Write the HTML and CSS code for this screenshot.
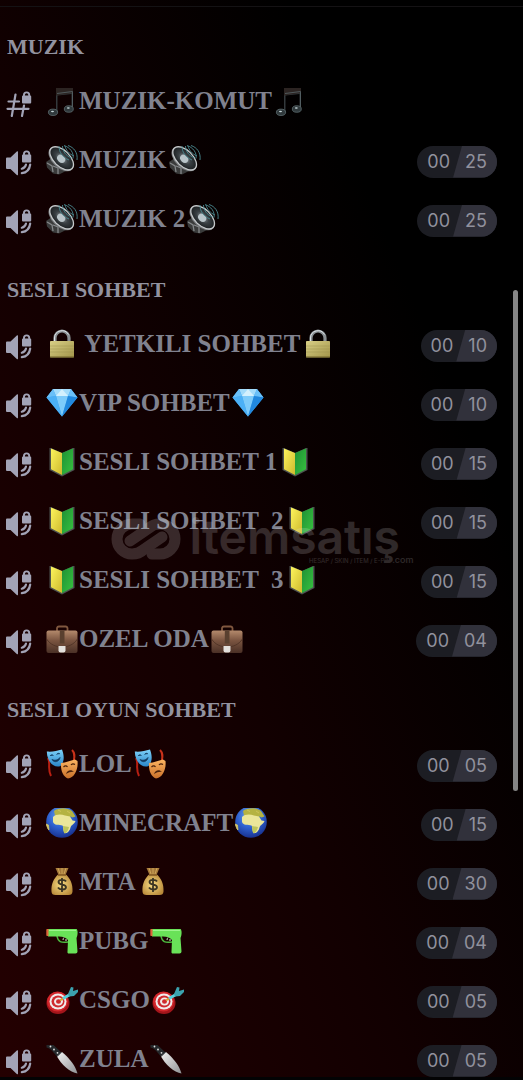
FILE: index.html
```html
<!DOCTYPE html>
<html lang="tr">
<head>
    <meta charset="UTF-8">
    <meta name="viewport" content="width=device-width, initial-scale=1.0">
    <title>Kanallar</title>
    <link rel="stylesheet" href="styles.css">
</head>
<body>
    <svg class="sprite" aria-hidden="true">
        <defs>
            <linearGradient id="gold" x1="0" y1="0" x2="1" y2="1">
                <stop offset="0" stop-color="#d8cf86"/><stop offset="1" stop-color="#a3954a"/>
            </linearGradient>
            <linearGradient id="steel" x1="0" y1="0" x2="1" y2="1">
                <stop offset="0" stop-color="#f2f2f2"/><stop offset="1" stop-color="#8f9194"/>
            </linearGradient>
            <linearGradient id="leather" x1="0" y1="0" x2="0" y2="1">
                <stop offset="0" stop-color="#b48a6c"/><stop offset=".45" stop-color="#7a5440"/><stop offset="1" stop-color="#4a3026"/>
            </linearGradient>
            <linearGradient id="yellow" x1="0" y1="0" x2="1" y2="1">
                <stop offset="0" stop-color="#fdf45c"/><stop offset="1" stop-color="#cdb92e"/>
            </linearGradient>
            <linearGradient id="green" x1="0" y1="0" x2="1" y2="1">
                <stop offset="0" stop-color="#1f8f35"/><stop offset="1" stop-color="#37c23f"/>
            </linearGradient>
            <radialGradient id="sea" cx=".45" cy=".3" r=".75">
                <stop offset="0" stop-color="#6fa9ee"/><stop offset=".5" stop-color="#2f62d0"/><stop offset="1" stop-color="#142a86"/>
            </radialGradient>
            <radialGradient id="sack" cx=".45" cy=".5" r=".6">
                <stop offset="0" stop-color="#f7dc84"/><stop offset="1" stop-color="#b98a3a"/>
            </radialGradient>
            <radialGradient id="cone" cx=".5" cy=".5" r=".55">
                <stop offset="0" stop-color="#9aa3a8"/><stop offset=".45" stop-color="#3b4145"/><stop offset="1" stop-color="#15181a"/>
            </radialGradient>
            <linearGradient id="blueface" x1="0" y1="0" x2="0" y2="1">
                <stop offset="0" stop-color="#7ed2fa"/><stop offset="1" stop-color="#2a86c8"/>
            </linearGradient>
            <linearGradient id="orangeface" x1="0" y1="0" x2="0" y2="1">
                <stop offset="0" stop-color="#fdb562"/><stop offset="1" stop-color="#c8702a"/>
            </linearGradient>
        </defs>

        <symbol id="voice" viewBox="0 1 26 28">
            <path d="M1 10.500h3.500l6.300-6a.7.700 0 0 1 1.200.5v22.600a.7.700 0 0 1-1.200.5L4.500 22H1a1 1 0 0 1-1-1v-9.500a1 1 0 0 1 1-1z"/>
            <path d="M17 7.500V7a3.600 3.600 0 0 1 7.200 0v.5a1 1 0 0 1 1 1V14.500a1 1 0 0 1-1 1H17a1 1 0 0 1-1-1V8.500a1 1 0 0 1 1-1zm1.900 0h3.400V7a1.700 1.700 0 0 0-3.400 0z"/>
            <path class="line" d="M15.800 21.700c2.300-.5 3.700-1.900 4.200-4.200M15.800 26.200c4.500-.6 7.800-4 8.400-8.700"/>
        </symbol>
        <symbol id="hash" viewBox="0 1 26 28">
            <path class="line" d="M9.500 6.500L5.800 28M18 17.500L16 28M2.500 13.500H13M1.500 20.800h21"/>
            <path d="M17 7.500V7a3.600 3.600 0 0 1 7.200 0v.5a1 1 0 0 1 1 1V14.500a1 1 0 0 1-1 1H17a1 1 0 0 1-1-1V8.500a1 1 0 0 1 1-1zm1.900 0h3.400V7a1.700 1.700 0 0 0-3.400 0z"/>
        </symbol>

        <symbol id="note" viewBox="0 0 32 30">
            <path d="M10 2h17v21h-1.500V8L11.500 9.500V27H10z" fill="#33393c"/>
            <path d="M10 2h17v5L10 9.500z" fill="#2c2422"/>
            <path d="M11 7.500L26.500 5.500V22" fill="none" stroke="#59676b" stroke-width=".8"/>
            <ellipse cx="7" cy="26.300" rx="4.600" ry="3.200" fill="#30393c" stroke="#65757a" stroke-width=".7"/>
            <ellipse cx="22.800" cy="23" rx="4.500" ry="3.300" fill="#30393c" stroke="#65757a" stroke-width=".7"/>
            <ellipse cx="6.500" cy="25.500" rx="1.500" ry=".8" fill="#c6d6d8"/>
            <ellipse cx="22.300" cy="22" rx="1.500" ry=".8" fill="#c6d6d8"/>
        </symbol>
        <symbol id="speaker" viewBox="0 0 32 30">
            <path d="M0 17l6-4 15 10-1 3-7 3.500-6-1-6-6z" fill="#3a3b3b"/>
            <path d="M1 18l5 3 1 6M7 21l5 2v6" fill="none" stroke="#85888a" stroke-width="1.300"/>
            <g transform="rotate(44 15.500 13.500)">
                <ellipse cx="15.500" cy="14" rx="15.300" ry="9" fill="#777a7d"/>
                <ellipse cx="15.500" cy="13.300" rx="14.500" ry="8" fill="url(#cone)" stroke="#c5c8ca" stroke-width="1.300"/>
                <ellipse cx="15.500" cy="14" rx="4.500" ry="3.500" fill="#b9c4c9"/>
            </g>
            <path d="M13 1c0 6 3 11 10 14M16.500 1c0 5 3 9.500 9 12M19 1c1 4 4 8 9 10M22 .5c6 2 10 7 9 14.500M18 .5c6 2 10 7 9 13" fill="none" stroke="#4b8b92" stroke-width=".9"/>
        </symbol>
        <symbol id="lock" viewBox="0 0 32 30">
            <path d="M9 13V9a7 7 0 0 1 14 0v4" fill="none" stroke="#8a9094" stroke-width="3.200"/>
            <path d="M8.500 12V9a7.500 7.500 0 0 1 14-3.500" fill="none" stroke="#dce3e8" stroke-width="1"/>
            <rect x="4" y="12" width="24" height="16.500" rx=".8" fill="url(#gold)"/>
            <path d="M4 17h24M4 20h24M4 23h24" stroke="#968a48" stroke-width=".4"/>
            <path d="M4 28h24" stroke="#6d612b"/>
        </symbol>
        <symbol id="diamond" viewBox="0 0 32 30">
            <path d="M7 1h18l6.500 8.500L16 28.500.5 9.500z" fill="#3fa4f2"/>
            <path d="M7 1h18l-3 7H10z" fill="#a3dcfb"/>
            <path d="M7 1L.5 9.500 10 8zM25 1l6.500 8.500L22 8z" fill="#6ac0f8"/>
            <path d="M10 8h12l-6 20.500z" fill="#7dcbfa"/>
            <path d="M.5 9.500L10 8l6 20.500z" fill="#4bb0f6"/>
            <path d="M22 8l9.500 1.500L16 28.500z" fill="#2188de"/>
            <path d="M16 1l-6 7h12z" fill="#d3f0fd"/>
        </symbol>
        <symbol id="shield" viewBox="0 0 32 30">
            <path d="M4 1h1l11 5L27 1h1.500v22L16 29.500 3.500 23V1z" fill="#4d5250"/>
            <path d="M5 1.500L16 6v22L5 22.300z" fill="url(#yellow)"/>
            <path d="M27 1.500L16 6v22l11-5.700z" fill="url(#green)"/>
        </symbol>
        <symbol id="briefcase" viewBox="0 0 32 30">
            <path d="M11 7V4a2 2 0 0 1 2-1.500h6.500a2 2 0 0 1 2 1.500v3" fill="none" stroke="#80573f" stroke-width="1.800"/>
            <rect x=".5" y="6.500" width="31" height="22.500" rx="2" fill="url(#leather)"/>
            <path d="M.5 15c4 6 10 8 15.500 8s11.500-2 15.500-8" fill="none" stroke="#4b3023" stroke-width=".8"/>
            <path d="M13.800 6.500h4.700v13h-4.700z" fill="#59402f"/>
            <path d="M12.500 22h7v4.500a2 2 0 0 1-2 2h-3a2 2 0 0 1-2-2z" fill="#e3e0dc"/>
        </symbol>
        <symbol id="masks" viewBox="0 0 32 30">
            <path d="M2 9c3 6-1 10 3 18" fill="none" stroke="#b91f12" stroke-width="2"/>
            <path d="M26 1c4 4 2 8 1.500 13" fill="none" stroke="#c9311a" stroke-width="2"/>
            <path d="M.8 2.500C6 3 11 2 16 .5c2 5 3 12-1.500 16.500C8 19.500 1 13 .8 2.500z" fill="url(#blueface)"/>
            <path d="M4 7c1-1.500 2.500-1.500 3.500-.5M10.500 5.500c1-1.500 2.500-1.500 3.500-.5M6 10.500c3 1.500 6 .5 8-2-.5 4-5.500 6-8 2z" fill="#123a5e" stroke="#123a5e" stroke-width=".8"/>
            <path d="M15 14c5-.5 9-2.500 14-3.500l2.500 1.500c1 9-3.500 17-9.500 17.500-5-1.500-7.500-8-7-15.500z" fill="url(#orangeface)"/>
            <path d="M17.500 18c1.500-1.500 3-1.300 4 0M25 16c1-1.500 2.500-1.500 4-.5" fill="none" stroke="#4a220c" stroke-width="1.200"/>
            <path d="M20 25c1-4 5.500-5 8-2-2.500-.5-5 .5-8 2z" fill="#4a220c"/>
        </symbol>
        <symbol id="globe" viewBox="0 0 32 30">
            <circle cx="16" cy="14" r="15.800" fill="url(#sea)"/>
            <path d="M8 3c4-3.500 13-4 18 0l3.500 5.500-3 1-2-1-3.500 1.500-4-1.500-3 .5-5-1.500z" fill="#b5b342"/>
            <path d="M7 9c3-3 8-3 12-1.500l5 1 2.500 4 3 .5c-1 3-4.500 4-5 6.500-.5 3-3 5.700-5 5.700-2.200-1-2-4.500-2.700-7.500-3.500-1.500-9 0-9.800-4z" fill="#ebe69a"/>
            <path d="M17 18l6 1c-.5 3-2.500 6-4.500 6.500-1.500-1.500-1-5-1.500-7.500z" fill="#bcc55c"/>
            <path d="M0 16l2.500 1 .5 5-1-1zM12 2l3 1.500M21 3l3 2" fill="#d9c964" stroke="#d9c964" stroke-width=".7"/>
        </symbol>
        <symbol id="moneybag" viewBox="0 0 32 30">
            <path d="M9.500 1h13l-3 7h-7z" fill="#a5783a"/>
            <path d="M12 1l2 6M16 1v6M20 1l-2 6" stroke="#d7b160" stroke-width=".8"/>
            <path d="M12 7.500h8c4 4 7 9 6.500 17-.2 2.500-1.500 3.500-4 3.500h-13c-2.500 0-4-1-4-3.500-.5-8 2.500-13 6.500-17z" fill="url(#sack)"/>
            <path d="M12 8h8" stroke="#7b5220" stroke-width="1.400"/>
            <path d="M20 14.500c-1-2-7.500-2.500-7.500.5 0 3.500 7.500 2 7.500 5.200 0 3-6.500 3-8 .3M16 11v14" fill="none" stroke="#3b3524" stroke-width="1.800"/>
        </symbol>
        <symbol id="pistol" viewBox="0 0 32 30">
            <path d="M11 10c1 6 4 7 11 6" fill="none" stroke="#4cb83e" stroke-width="1.500"/>
            <path d="M2 3h28.500c1.500 1 1.500 6 0 9l1 13.500a2 2 0 0 1-2 2H23a1.500 1.500 0 0 1-1.500-2L22 14c-2-2.500-5-3.500-9-3.500H2z" fill="#69e258"/>
            <path d="M3 4.500h27" stroke="#9cf58c"/>
            <path d="M17 14c0-1 .5-2 1-2.500M20 15v-2" stroke="#d9f0d3"/>
            <path d="M1 3h1.500v7H1a1 1 0 0 1-.7-1V4A1 1 0 0 1 1 3z" fill="#e0633a"/>
        </symbol>
        <symbol id="target" viewBox="0 0 32 30">
            <ellipse cx="12" cy="18" rx="11.500" ry="11" fill="#a3151b"/>
            <ellipse cx="11.500" cy="16.500" rx="10.500" ry="10" fill="#d3262b"/>
            <ellipse cx="12" cy="16.500" rx="8.500" ry="8" fill="#f0eaea"/>
            <ellipse cx="12" cy="16.500" rx="6.500" ry="6" fill="#cf2a2e"/>
            <ellipse cx="12.500" cy="16.500" rx="4.500" ry="4" fill="#f0eaea"/>
            <ellipse cx="12.500" cy="16.500" rx="2.500" ry="2.200" fill="#cf2a2e"/>
            <path d="M14 15.500l3-2" stroke="#d8a431" stroke-width="2"/>
            <path d="M17 13.500l7-4" stroke="#57d2dd" stroke-width="3"/>
            <path d="M22 9l3-7 2.500.5-.5 3.500 5-1.500v2.500l-4 4-5 .5z" fill="#3ba2ae"/>
        </symbol>
        <symbol id="knife" viewBox="0 0 32 30">
            <path d="M11 12.500l5-4.500C24 15 29 21 31.500 29.500 24 28.500 15 20 11 12.500z" fill="url(#steel)"/>
            <path d="M.5 1h7l8 7.500-4.500 4C8 9 5 4.500.5 3.500z" fill="#24272a"/>
            <path d="M11 12.500l5-4.500" stroke="#6c7074"/>
            <circle cx="4.500" cy="2.500" r=".9" fill="#dcdcdc"/>
            <circle cx="8" cy="5.500" r=".9" fill="#dcdcdc"/>
            <circle cx="11.500" cy="8.800" r=".9" fill="#dcdcdc"/>
        </symbol>
    </svg>

    <div class="topbar"></div>

    <main class="channels">
        <h2>MUZIK</h2>
        <ul>
            <li><a href="#">
                <svg class="type"><use href="#hash"/></svg>
                <span class="name"><svg class="emoji"><use href="#note"/></svg>MUZIK-KOMUT<svg class="emoji"><use href="#note"/></svg></span>
            </a></li>
            <li><a href="#">
                <svg class="type"><use href="#voice"/></svg>
                <span class="name"><svg class="emoji"><use href="#speaker"/></svg>MUZIK<svg class="emoji"><use href="#speaker"/></svg></span>
                <span class="limit"><span>00</span><span class="max">25</span></span>
            </a></li>
            <li><a href="#">
                <svg class="type"><use href="#voice"/></svg>
                <span class="name"><svg class="emoji"><use href="#speaker"/></svg>MUZIK 2<svg class="emoji"><use href="#speaker"/></svg></span>
                <span class="limit"><span>00</span><span class="max">25</span></span>
            </a></li>
        </ul>

        <h2>SESLI SOHBET</h2>
        <ul>
            <li><a href="#">
                <svg class="type"><use href="#voice"/></svg>
                <span class="name"><svg class="emoji"><use href="#lock"/></svg> YETKILI SOHBET<svg class="emoji"><use href="#lock"/></svg></span>
                <span class="limit"><span>00</span><span class="max">10</span></span>
            </a></li>
            <li><a href="#">
                <svg class="type"><use href="#voice"/></svg>
                <span class="name"><svg class="emoji"><use href="#diamond"/></svg>VIP SOHBET<svg class="emoji"><use href="#diamond"/></svg></span>
                <span class="limit"><span>00</span><span class="max">10</span></span>
            </a></li>
            <li><a href="#">
                <svg class="type"><use href="#voice"/></svg>
                <span class="name"><svg class="emoji"><use href="#shield"/></svg>SESLI SOHBET 1<svg class="emoji"><use href="#shield"/></svg></span>
                <span class="limit"><span>00</span><span class="max">15</span></span>
            </a></li>
            <li><a href="#">
                <svg class="type"><use href="#voice"/></svg>
                <span class="name"><svg class="emoji"><use href="#shield"/></svg>SESLI SOHBET  2<svg class="emoji"><use href="#shield"/></svg></span>
                <span class="limit"><span>00</span><span class="max">15</span></span>
            </a></li>
            <li><a href="#">
                <svg class="type"><use href="#voice"/></svg>
                <span class="name"><svg class="emoji"><use href="#shield"/></svg>SESLI SOHBET  3<svg class="emoji"><use href="#shield"/></svg></span>
                <span class="limit"><span>00</span><span class="max">15</span></span>
            </a></li>
            <li><a href="#">
                <svg class="type"><use href="#voice"/></svg>
                <span class="name"><svg class="emoji"><use href="#briefcase"/></svg>OZEL ODA<svg class="emoji"><use href="#briefcase"/></svg></span>
                <span class="limit"><span>00</span><span class="max">04</span></span>
            </a></li>
        </ul>

        <h2>SESLI OYUN SOHBET</h2>
        <ul>
            <li><a href="#">
                <svg class="type"><use href="#voice"/></svg>
                <span class="name"><svg class="emoji"><use href="#masks"/></svg>LOL<svg class="emoji"><use href="#masks"/></svg></span>
                <span class="limit"><span>00</span><span class="max">05</span></span>
            </a></li>
            <li><a href="#">
                <svg class="type"><use href="#voice"/></svg>
                <span class="name"><svg class="emoji"><use href="#globe"/></svg>MINECRAFT<svg class="emoji"><use href="#globe"/></svg></span>
                <span class="limit"><span>00</span><span class="max">15</span></span>
            </a></li>
            <li><a href="#">
                <svg class="type"><use href="#voice"/></svg>
                <span class="name"><svg class="emoji"><use href="#moneybag"/></svg>MTA<svg class="emoji"><use href="#moneybag"/></svg></span>
                <span class="limit"><span>00</span><span class="max">30</span></span>
            </a></li>
            <li><a href="#">
                <svg class="type"><use href="#voice"/></svg>
                <span class="name"><svg class="emoji"><use href="#pistol"/></svg>PUBG<svg class="emoji"><use href="#pistol"/></svg></span>
                <span class="limit"><span>00</span><span class="max">04</span></span>
            </a></li>
            <li><a href="#">
                <svg class="type"><use href="#voice"/></svg>
                <span class="name"><svg class="emoji"><use href="#target"/></svg>CSGO<svg class="emoji"><use href="#target"/></svg></span>
                <span class="limit"><span>00</span><span class="max">05</span></span>
            </a></li>
            <li><a href="#">
                <svg class="type"><use href="#voice"/></svg>
                <span class="name"><svg class="emoji"><use href="#knife"/></svg>ZULA<svg class="emoji"><use href="#knife"/></svg></span>
                <span class="limit"><span>00</span><span class="max">05</span></span>
            </a></li>
        </ul>
    </main>

    <div class="bottombar"></div>
    <div class="scrollbar"></div>

    <div class="watermark">
        <svg viewBox="0 0 72 42">
            <path d="M30 6H22a15 15 0 0 0 0 30c4 0 8-1 11-4L52 19"/>
            <path d="M42 36h8a15 15 0 0 0 0-30c-4 0-8 1-11 4L20 23"/>
        </svg>
        <div class="brand">
            <span class="title">itemsatış</span>
            <span class="tagline">HESAP / SKIN / ITEM / E-PIN <b>.com</b></span>
        </div>
    </div>
</body>
</html>
```
FILE: styles.css
```css
:root {
    --text: #80828f;
    --heading: #92929f;
    --icon: #a2a3b6;
    --pill: #1c1d23;
    --pill-light: #31313b;
}

* {
    margin: 0;
    padding: 0;
    box-sizing: border-box;
}

body {
    position: relative;
    display: flex;
    flex-direction: column;
    height: 100vh;
    overflow: hidden;
    background: linear-gradient(67deg, #240001 0%, #120001 42%, #000 76%);
    font-family: "Liberation Serif", serif;
    color: var(--text);
}

.sprite {
    position: absolute;
    width: 0;
    height: 0;
}

.topbar {
    flex: none;
    height: 7px;
    border-bottom: 1px solid #141214;
}

.bottombar {
    flex: none;
    height: 3px;
    background: #030304;
}

.channels {
    flex: 1;
    min-height: 0;
    overflow: hidden;
}

.channels h2 {
    padding: 27px 7px 13px;
    font-size: 22px;
    line-height: 26px;
    color: var(--heading);
}

.channels ul {
    list-style: none;
}

.channels a {
    display: flex;
    align-items: center;
    height: 59px;
    padding: 0 26px 0 6px;
    color: inherit;
    text-decoration: none;
}

.type {
    flex: none;
    width: 26px;
    height: 28px;
    margin-right: 14px;
    fill: var(--icon);
}

.line {
    fill: none;
    stroke: var(--icon);
    stroke-width: 2.2px;
    stroke-linecap: round;
}

.name {
    flex: 1;
    display: flex;
    align-items: center;
    padding-bottom: 3px;
    font-size: 25px;
    font-weight: bold;
    line-height: 30px;
    white-space: pre;
}

.emoji {
    flex: none;
    width: 32px;
    height: 30px;
    margin-right: 1px;
}

.emoji:last-child {
    margin-left: 2px;
}

.limit {
    display: flex;
    height: 32px;
    border-radius: 16px;
    overflow: hidden;
    background: var(--pill);
    color: #91919d;
    font: 18px/32px Inter, sans-serif;
    padding-left: 10px;
}

.limit .max {
    margin-left: 3px;
    padding: 0 10px 0 12px;
    background: var(--pill-light);
    clip-path: polygon(9px 0, 100% 0, 100% 100%, 0 100%);
}

.scrollbar {
    position: absolute;
    top: 290px;
    right: 5px;
    width: 5px;
    height: 501px;
    border-radius: 3px;
    background: #858585;
}

.watermark {
    position: absolute;
    top: 48%;
    left: 50%;
    display: flex;
    gap: 8px;
    width: 304px;
    transform: translateX(-50%);
    opacity: .16;
    color: #fff;
    font-family: Inter, sans-serif;
    pointer-events: none;
}

.watermark svg {
    flex: none;
    width: 72px;
    height: 42px;
    fill: none;
    stroke: #fff;
    stroke-width: 11px;
    stroke-linecap: round;
}

.brand {
    flex: 1;
    display: flex;
    flex-direction: column;
}

.title {
    font-size: 48px;
    font-weight: 600;
    line-height: 38px;
}

.tagline {
    align-self: flex-end;
    font-size: 6px;
    line-height: 8px;
    white-space: nowrap;
}

.tagline b {
    font-size: 9px;
    font-weight: 500;
}
```
